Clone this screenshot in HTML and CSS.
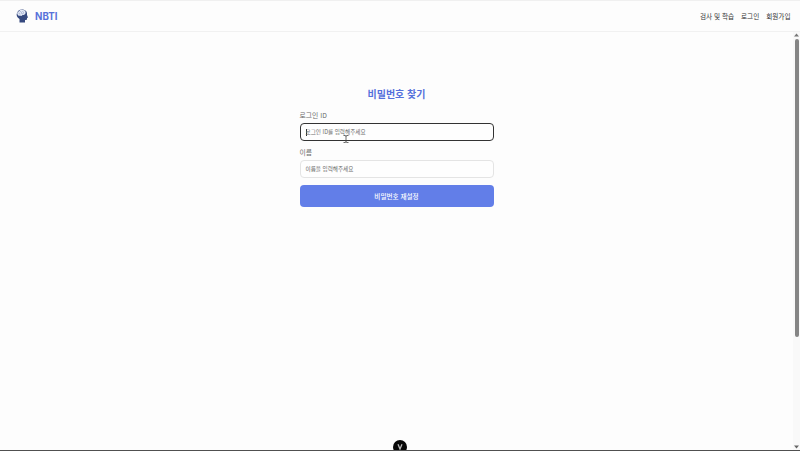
FILE: index.html
```
<!DOCTYPE html>
<html lang="ko">
<head>
<meta charset="utf-8">
<title>NBTI</title>
<link rel="stylesheet" href="styles.css">
</head>
<body>
<header class="header">
  <a class="brand">
    <svg class="logo" viewBox="0 0 24 28" aria-hidden="true">
      <path d="M7 27V20C2 17 0 12 2 8 4 2 9 0 14 1c6 1 9 5 8 11l2 5-2 1v3c-1 1-3 1-4 1v5z" fill="#35497f"/>
      <path d="M4 12c-3-3-1-7 2-7 1-4 5-4 8-3 4 0 6 3 5 6 0 3-3 4-6 4-2 3-4 2-5 1-2 1-4 0-4-1z" fill="#e2e8f5"/>
      <path d="M5 8c2 0 3 1 3 3M8 5c2 0 3 1 3 3s2 2 4 1M14 4c-1 1 0 3 2 3" fill="none" stroke="#7082b5"/>
    </svg>
    <span class="name">NBTI</span>
  </a>
  <nav class="nav"><a>검사 및 학습</a><a>로그인</a><a>회원가입</a></nav>
</header>
<div class="body">
  <main class="main">
    <form class="form">
      <h1 class="title">비밀번호 찾기</h1>
      <label class="label">로그인 ID</label>
      <div class="field focused"><span class="caret"></span>로그인 ID를 입력해주세요</div>
      <label class="label second">이름</label>
      <div class="field">이름을 입력해주세요</div>
      <button class="submit" type="button">비밀번호 재설정</button>
    </form>
  </main>
  <div class="scrollbar">
    <svg class="arrow" viewBox="0 0 5 4"><path d="M0 3.6 2.5 .4 5 3.6z" fill="#777"/></svg>
    <div class="thumb"></div>
    <svg class="arrow" viewBox="0 0 5 4"><path d="M0 .4 2.5 3.6 5 .4z" fill="#666"/></svg>
  </div>
</div>
<svg class="pointer" viewBox="0 0 6 8"><path d="M.5.5h1.5q1 0 1 1 0-1 1-1h1.5M3 1.5v5M.5 7.5h1.5q1 0 1-1 0 1 1 1h1.5" fill="none" stroke="#444" stroke-width=".8"/></svg>
<svg class="badge" viewBox="0 0 14 14"><circle cx="7" cy="7" r="7" fill="#080808"/><path d="M5 4.3 7 9 9 4.3" fill="none" stroke="#bbb" stroke-width="1.3"/></svg>
</body>
</html>
```
FILE: styles.css
```
* { box-sizing: border-box; }
body {
  margin: 0;
  height: 451px;
  overflow: hidden;
  display: flex;
  flex-direction: column;
  position: relative;
  background: #fdfdfd;
  border-top: 1px solid #f0f0f0;
  border-bottom: 1px solid #505050;
  font-family: "Noto Sans CJK KR", sans-serif;
  color: #333;
}
.header {
  height: 31px;
  flex: none;
  display: flex;
  align-items: center;
  justify-content: space-between;
  padding: 0 9.5px 1px 16px;
  border-bottom: 1px solid #f1f1f1;
}
.brand { display: flex; align-items: center; gap: 7px; }
.logo { width: 12px; height: 14px; }
.name { padding-top: 2px; font: 700 9.7px/14px Inter, sans-serif; color: #5872da; }
.nav { display: flex; gap: 7px; font-size: 6.6px; line-height: 12px; color: #333; }
.body { flex: 1; display: flex; min-height: 0; }
.main { flex: 1; display: flex; justify-content: center; }
.form { width: 194px; padding-top: 54px; }
.title {
  margin: 0 0 8px;
  text-align: center;
  font-size: 10px;
  line-height: 16px;
  font-weight: 700;
  color: #5570dc;
}
.label { display: block; font-size: 6.8px; line-height: 10px; color: #6c6c6c; margin-bottom: 3px; }
.second { margin-top: 6px; }
.field {
  height: 18px;
  display: flex;
  align-items: center;
  padding: 0 5px;
  border: 1px solid #e4e4e4;
  border-radius: 4px;
  background: #fefefe;
  font-size: 5.6px;
  color: #6b6b6b;
}
.focused { border: 1.5px solid #333; }
.caret { width: 1px; height: 7px; margin-right: -1px; background: #333; }
.submit {
  display: block;
  width: 100%;
  height: 22px;
  margin-top: 7px;
  padding: 0;
  border: 0;
  border-radius: 4px;
  background: #627ee8;
  color: #fff;
  font: 500 6.6px/22px "Noto Sans CJK KR", sans-serif;
}
.scrollbar {
  width: 7px;
  display: flex;
  flex-direction: column;
  align-items: center;
  padding: 1px 0 1px;
  background: #f9f9f9;
}
.arrow { width: 5px; height: 4px; flex: none; }
.thumb { width: 4px; height: 298px; margin: 2px 0 auto; border-radius: 2px; background: #858585; }
.pointer { position: absolute; left: 343px; top: 134px; width: 6px; height: 8px; }
.badge { position: absolute; left: 393px; top: 439px; width: 14px; height: 14px; }
```
